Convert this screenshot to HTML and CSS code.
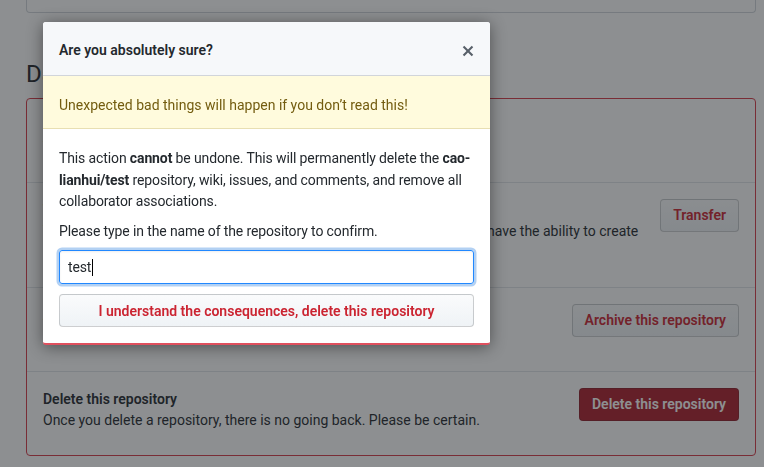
FILE: index.html
```html
<!DOCTYPE html>
<html lang="en">
<head>
<meta charset="utf-8">
<title>Delete repository</title>
<link rel="stylesheet" href="styles.css">
</head>
<body>
<div class="page">
  <div class="top-box"></div>
  <h2 class="subhead">Danger Zone</h2>
  <div class="danger-box">
    <div class="row">
      <div class="row-text">
        <strong class="row-title">Make this repository private</strong>
        <p class="row-desc">This repository is currently public.</p>
      </div>
    </div>
    <div class="row">
      <div class="row-text">
        <strong class="row-title">Transfer ownership</strong>
        <p class="row-desc">Transfer this repository to another user or to an organization where you have the ability to create repositories.</p>
      </div>
      <button class="btn btn-danger-outline">Transfer</button>
    </div>
    <div class="row">
      <div class="row-text">
        <strong class="row-title">Archive this repository</strong>
        <p class="row-desc">Mark this repository as archived and read-only.</p>
      </div>
      <button class="btn btn-danger-outline">Archive this repository</button>
    </div>
    <div class="row">
      <div class="row-text">
        <strong class="row-title">Delete this repository</strong>
        <p class="row-desc">Once you delete a repository, there is no going back. Please be certain.</p>
      </div>
      <button class="btn btn-danger-filled">Delete this repository</button>
    </div>
  </div>
</div>

<div class="overlay"></div>

<div class="modal">
  <div class="modal-header">
    <h3 class="modal-title">Are you absolutely sure?</h3>
    <svg class="close-icon" width="12" height="16" viewBox="0 0 12 16" aria-hidden="true"><path fill="#586069" d="M7.48 8l3.75 3.75-1.48 1.48L6 9.48l-3.75 3.75-1.48-1.48L4.52 8 .77 4.25l1.48-1.48L6 6.52l3.75-3.75 1.48 1.48L7.48 8z"/></svg>
  </div>
  <div class="flash-warn">Unexpected bad things will happen if you don’t read this!</div>
  <div class="modal-body">
    <p class="body-p">This action <strong>cannot</strong> be undone. This will permanently delete the <strong>cao-lianhui/test</strong> repository, wiki, issues, and comments, and remove all collaborator associations.</p>
    <p class="body-p body-p-last">Please type in the name of the repository to confirm.</p>
    <div class="fake-input">test<span class="caret"></span></div>
    <button class="btn-block">I understand the consequences, delete this repository</button>
  </div>
</div>
</body>
</html>
```

FILE: styles.css
```css
* { box-sizing: border-box; }

html, body {
  margin: 0;
  padding: 0;
  background: #ffffff;
  font-family: Roboto, "Liberation Sans", sans-serif;
  font-size: 14px;
  line-height: 1.5;
  color: #24292e;
}

.page {
  margin-left: 26px;
  width: 730px;
}

.top-box {
  height: 13px;
  border: 1px solid #d1d5da;
  border-top: none;
  border-radius: 0 0 4px 4px;
}

.subhead {
  margin: 43px 0 6px;
  font-size: 24px;
  font-weight: 400;
  line-height: 36px;
  color: #24292e;
}

.danger-box {
  border: 1px solid #d73a49;
  border-radius: 4px;
}

.row {
  display: flex;
  align-items: flex-start;
  justify-content: space-between;
  gap: 16px;
  padding: 17px 16px 16px;
  border-top: 1px solid #e1e4e8;
}

.row:first-child { border-top: none; }

.row-text { flex: 1; }

.row-title {
  display: block;
  font-weight: 600;
}

.row-desc {
  margin: 0 0 8px;
}

.btn {
  flex: none;
  height: 33px;
  margin-top: -1px;
  padding: 0 12px;
  font-family: inherit;
  font-size: 14px;
  font-weight: 600;
  line-height: 31px;
  border-radius: 4px;
  cursor: pointer;
}

.btn-danger-outline {
  color: #cb2431;
  background: linear-gradient(#fafbfc, #eff3f6);
  border: 1px solid rgba(27, 31, 35, 0.2);
}

.btn-danger-filled {
  color: #ffffff;
  background: #ad1f2d;
  border: 1px solid rgba(27, 31, 35, 0.2);
}

.overlay {
  position: fixed;
  inset: 0;
  background: rgba(27, 31, 35, 0.5);
}

.modal {
  position: absolute;
  top: 22px;
  left: 43px;
  width: 447px;
  background: #ffffff;
  border-radius: 3px;
  border-bottom: 2px solid #e0505e;
  box-shadow: 0 2px 16px rgba(0, 0, 0, 0.45);
  overflow: hidden;
}

.modal-header {
  display: flex;
  align-items: center;
  justify-content: space-between;
  padding: 18px 16px 14px;
  background: #f6f8fa;
  border-bottom: 1px solid #d1d5da;
}

.modal-title {
  margin: 0;
  font-size: 14px;
  font-weight: 600;
  line-height: 21px;
}

.close-icon {
  display: block;
}

.flash-warn {
  padding: 19px 16px 13px;
  line-height: 20px;
  color: #735c0f;
  background: #fffbdd;
  border-bottom: 1px solid #e8dfb2;
}

.modal-body {
  padding: 19px 16px 16px;
  letter-spacing: -0.12px;
}

.body-p {
  margin: 0 0 8px;
  line-height: 21.5px;
}

.body-p-last { margin-bottom: 8px; }

.body-p strong { font-weight: 700; }

.fake-input {
  height: 34px;
  padding: 6px 8px;
  line-height: 20px;
  color: #24292e;
  border: 1px solid #2188ff;
  border-radius: 3px;
  box-shadow: inset 0 1px 2px rgba(27, 31, 35, 0.075), 0 0 0 2.5px rgba(3, 102, 214, 0.3);
}

.caret {
  display: inline-block;
  width: 1px;
  height: 17px;
  margin-left: 1px;
  vertical-align: -4px;
  background: #000000;
}

.btn-block {
  display: block;
  width: 100%;
  height: 33px;
  margin-top: 10px;
  font-family: inherit;
  font-size: 14px;
  font-weight: 600;
  line-height: 20px;
  letter-spacing: 0;
  color: #cb2431;
  background: linear-gradient(#fafbfc, #eff3f6);
  border: 1px solid rgba(27, 31, 35, 0.2);
  border-radius: 4px;
  cursor: pointer;
}
```
